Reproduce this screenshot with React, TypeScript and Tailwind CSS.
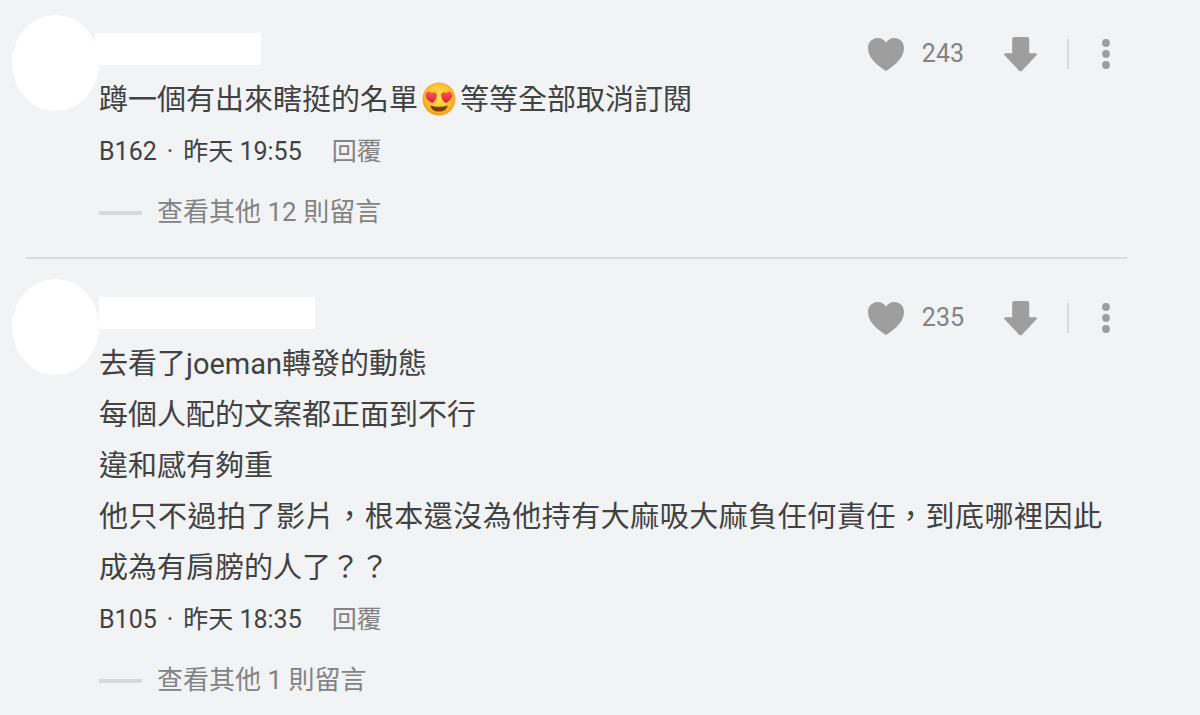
import React, { Fragment, ReactNode } from "react";

const HeartEyes = () => (
  <svg
    viewBox="0 0 34 34"
    role="img"
    aria-label="😍"
    className="mx-1 inline-block size-[34px] align-[-6px]"
  >
    <defs>
      <radialGradient id="face" cx="50%" cy="45%" r="55%">
        <stop offset="0%" stopColor="#ffdf4e" />
        <stop offset="65%" stopColor="#fdc633" />
        <stop offset="100%" stopColor="#ef9a1c" />
      </radialGradient>
      <linearGradient id="eye" x1="0" y1="0" x2="0" y2="1">
        <stop offset="0%" stopColor="#f9555c" />
        <stop offset="100%" stopColor="#d9202f" />
      </linearGradient>
    </defs>
    <circle cx="17" cy="17" r="16.5" fill="url(#face)" />
    <path
      d="M8.3 23.2C13.5 25.2 20.5 25.2 25.7 23.2C25.2 27.2 21.8 29.6 17 29.6S8.8 27.2 8.3 23.2Z"
      fill="#7a3f0c"
    />
    <path
      d="M10.3 21.1C5.6 18.9 3.4 16 3.7 12.8C4 9.7 7.6 8.5 9.5 11.2C11.7 8.9 15.3 10.6 14.9 13.7C14.6 16.6 13 18.9 10.3 21.1Z"
      fill="url(#eye)"
    />
    <path
      d="M23.7 21.1C28.4 18.9 30.6 16 30.3 12.8C30 9.7 26.4 8.5 24.5 11.2C22.3 8.9 18.7 10.6 19.1 13.7C19.4 16.6 21 18.9 23.7 21.1Z"
      fill="url(#eye)"
    />
  </svg>
);

const HeartIcon = () => (
  <svg viewBox="0 0 36 33" className="h-[33px] w-9" fill="currentColor">
    <path d="M18 4.5C20 1.6 23 0 26.2 0C31.8 0 36 4.3 36 10C36 19 28.5 26.2 18.9 32.4Q18 33 17.1 32.4C7.5 26.2 0 19 0 10C0 4.3 4.2 0 9.8 0C13 0 16 1.6 18 4.5Z" />
  </svg>
);

const DownIcon = () => (
  <svg viewBox="0 0 33 35" className="h-[35px] w-[33px]" fill="currentColor">
    <path d="M10.2 0H23.2Q25.2 0 25.2 2V16.3H31.6Q33.8 16.5 32.5 18.2L18.2 33.4Q16.5 35.2 14.8 33.4L.5 18.2Q-.8 16.5 1.4 16.3H8.2V2Q8.2 0 10.2 0Z" />
  </svg>
);

const DotsIcon = () => (
  <svg viewBox="0 0 8 30" className="h-[30px] w-2" fill="currentColor">
    <circle cx="4" cy="4" r="3.9" />
    <circle cx="4" cy="15" r="3.9" />
    <circle cx="4" cy="26" r="3.9" />
  </svg>
);

interface CommentData {
  floor: string;
  time: string;
  likes: number;
  replies: number;
  nameClass: string;
  className: string;
  content: ReactNode[];
}

const comments: CommentData[] = [
  {
    floor: "B162",
    time: "昨天 19:55",
    likes: 243,
    replies: 12,
    nameClass: "-ml-1 w-[166px]",
    className: "pt-[15px] pb-[19px]",
    content: [
      <>
        蹲一個有出來瞎挺的名單
        <HeartEyes />
        等等全部取消訂閱
      </>,
    ],
  },
  {
    floor: "B105",
    time: "昨天 18:35",
    likes: 235,
    replies: 1,
    nameClass: "w-[216px]",
    className: "pt-5",
    content: [
      "去看了joeman轉發的動態",
      "每個人配的文案都正面到不行",
      "違和感有夠重",
      "他只不過拍了影片，根本還沒為他持有大麻吸大麻負任何責任，到底哪裡因此成為有肩膀的人了？？",
    ],
  },
];

const Comment = ({ data }: { data: CommentData }) => {
  return (
    <article className={`flex pl-3 ${data.className}`}>
      <div className="h-24 w-[87px] shrink-0 rounded-[50%] bg-white" />
      <div className="min-w-0 flex-1">
        <header className="flex items-start justify-between pt-[18px] pr-[90px]">
          <div className={`h-8 bg-white ${data.nameClass}`} />
          <div className="flex h-[42px] items-center text-[#9e9e9e]">
            <button type="button" aria-label="愛心">
              <HeartIcon />
            </button>
            <span className="ml-[18px] text-[25px] text-[#838383]">
              {data.likes}
            </span>
            <button type="button" aria-label="下" className="ml-10">
              <DownIcon />
            </button>
            <span className="ml-[30px] h-[30px] w-[2px] bg-[#d9dbdc]" />
            <button type="button" aria-label="更多" className="ml-[33px]">
              <DotsIcon />
            </button>
          </div>
        </header>
        <div className="pr-[98px] text-justify text-[29px] leading-[51px] text-[#424242]">
          {data.content.map((line, index) => (
            <p key={index}>{line}</p>
          ))}
        </div>
        <div className="flex text-[25px] leading-[51px] text-[#424242]">
          <span>{data.floor}</span>
          <span className="mx-[10px]">·</span>
          <span>{data.time}</span>
          <button type="button" className="ml-[30px] text-[#838383]">
            回覆
          </button>
        </div>
        <button
          type="button"
          className="mt-[10px] flex items-center gap-[15px] text-[26px] leading-[51px] text-[#838383]"
        >
          <span className="h-1 w-[43px] bg-[#d8d9da]" />
          <span>查看其他 {data.replies} 則留言</span>
        </button>
      </div>
    </article>
  );
};

export default function App() {
  return (
    <main
      lang="zh-Hant"
      className="min-h-screen bg-[#f1f3f5] font-[Roboto,'Noto_Sans_CJK_TC',sans-serif]"
    >
      {comments.map((item, index) => (
        <Fragment key={item.floor}>
          {index > 0 && (
            <hr className="mr-[73px] ml-[26px] border-t-2 border-[#d9dbdd]" />
          )}
          <Comment data={item} />
        </Fragment>
      ))}
    </main>
  );
}
